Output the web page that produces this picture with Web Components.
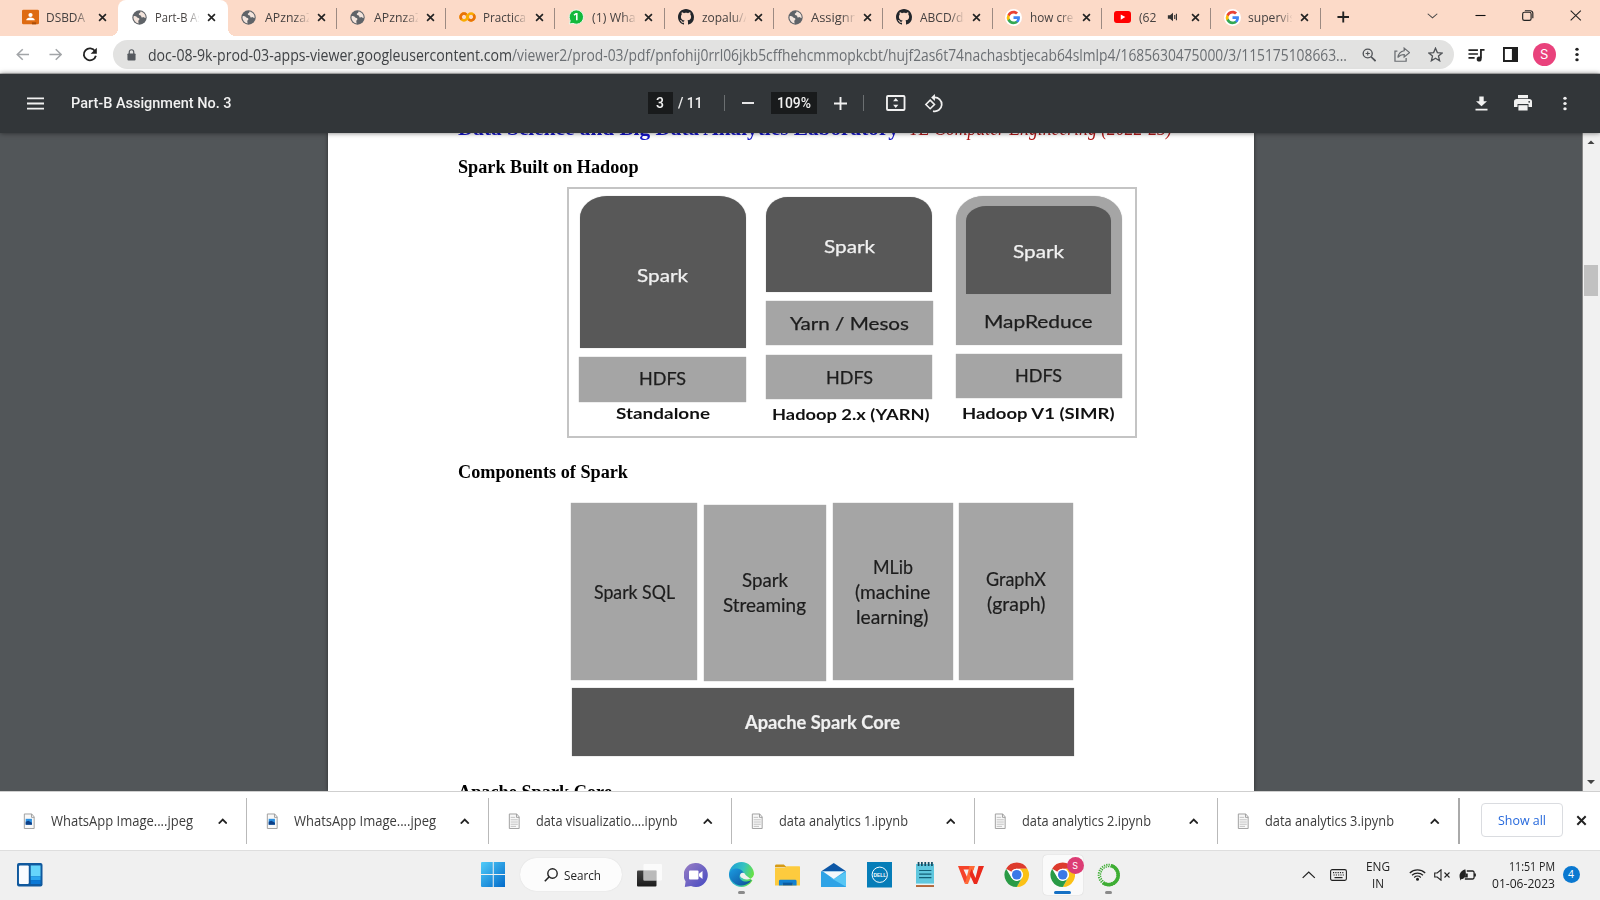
<!DOCTYPE html>
<html lang="en">
<head>
<meta charset="utf-8">
<title>Part-B Assignment No. 3</title>
<style>
html,body{margin:0;height:100%;overflow:hidden;background:#f0f0f0}
</style>
</head>
<body>
<desktop-screen></desktop-screen>
<script>
const define=(name,css,html,after)=>customElements.define(name,class extends HTMLElement{
  connectedCallback(){
    if(this.shadowRoot)return;
    const root=this.attachShadow({mode:'open'});
    root.innerHTML='<style>*{box-sizing:border-box}'+css+'</style>'+(typeof html==='function'?html(this):html);
    if(after)after(this,root);
  }
});

/* ---------- icons ---------- */
const G='<path fill="#4285f4" d="M23 12.3c0-.8-.1-1.6-.2-2.3H12v4.4h6.200c-.3 1.400-1.100 2.600-2.300 3.400v2.900h3.700c2.200-2 3.400-5 3.400-8.400z"/><path fill="#34a853" d="M12 23.500c3.100 0 5.700-1 7.600-2.800l-3.700-2.900c-1 .7-2.300 1.100-3.900 1.100-3 0-5.500-2-6.400-4.700H1.800v3C3.700 21 7.500 23.500 12 23.500z"/><path fill="#fbbc05" d="M5.600 14.200a6.900 6.900 0 0 1 0-4.400v-3H1.800a11.500 11.500 0 0 0 0 10.400z"/><path fill="#ea4335" d="M12 5.100c1.700 0 3.200.6 4.400 1.700l3.300-3.300C17.700 1.600 15.100.5 12 .5 7.500.5 3.700 3 1.800 6.800l3.800 3C6.500 7.100 9 5.100 12 5.100z"/>';
const chrome='<circle cx="24" cy="24" r="23" fill="#fff"/><path fill="#dd3b2d" d="M24 1a23 23 0 0 1 20 11.500H24A11.500 11.500 0 0 0 14 18.300L4 12.600A23 23 0 0 1 24 1z"/><path fill="#fbc116" d="M44 12.500A23 23 0 0 1 24 47l10-17.300a11.500 11.500 0 0 0 0-11.500L30 12.500z"/><path fill="#2a9b46" d="M24 47A23 23 0 0 1 4 12.500l10 17.300a11.500 11.500 0 0 0 14 4.900z"/><path fill="#2a9b46" d="M24 47l10-17.300a11.500 11.500 0 0 1-8 5.700z"/><circle cx="24" cy="24" r="11.500" fill="#fff"/><circle cx="24" cy="24" r="9" fill="#3b78e7"/>';
const page='<path d="M1.500 1h8.300L12.500 4v12h-11z" fill="#f8f8f8" stroke="#9c9c9c"/><path d="M9.500 1v3.500h3" fill="none" stroke="#9c9c9c"/>';
const ICONS={
 classroom:['0 0 24 24','<rect width="24" height="22" y="1" rx="2" fill="#de6b12"/><circle cx="12" cy="9" r="3" fill="#fff"/><path d="M6 17c0-3 3-4.200 6-4.200s6 1.200 6 4.200z" fill="#fff"/><path d="M14 20h6v3h-6z" fill="#a84c06"/>'],
 globe:['0 0 24 24','<circle cx="12" cy="12" r="11.500" fill="#5f6368"/><path fill="#f3e4dc" d="M3 9.500c2 .2 3.800.3 5 2 1 1.500 3.700.8 3.800 2.800.1 1.700-1.700 1.700-1.700 3.500 0 1.300.3 2.300.6 3.700A10 10 0 0 1 2.300 11zM13.500 2.200c0 1.400-.2 2.300-1.700 2.800-1.300.4-1 1.600-.5 2.500.7 1.200 2.300.5 3.100 1.700.7 1 .1 2.300 1.400 2.800 1.200.4 1.600-.9 2.800-.6 1.300.3 2 1 3.200 1.200.5-4.600-2.500-9.400-8.300-10.400z"/>'],
 colab:['0 0 24 14','<g fill="none" stroke-width="3.600"><circle cx="7" cy="7" r="4.800" stroke="#f9ab00"/><circle cx="17" cy="7" r="4.800" stroke="#f9ab00"/><path d="M3.600 10.400A4.800 4.800 0 0 1 10.400 3.600M20.400 3.600A4.800 4.800 0 0 1 13.600 10.400" stroke="#e8710a"/></g>'],
 whats:['0 0 24 24','<path d="M2 22.500l1.300-5A10.700 10.700 0 1 1 7.500 21.500z" fill="#12b93c" stroke="#e9f8ec" stroke-width="1.500"/><path d="M9 9.200l3-2.200h1.200v10" fill="none" stroke="#fff" stroke-width="2.300"/>'],
 github:['0 0 16 16','<path fill="#22262b" d="M8 0C3.580 0 0 3.580 0 8c0 3.540 2.290 6.530 5.470 7.590.4.070.55-.17.55-.38 0-.19-.01-.82-.01-1.490-2.010.37-2.530-.49-2.690-.94-.09-.23-.48-.94-.82-1.130-.28-.15-.68-.52-.01-.53.63-.01 1.080.58 1.230.82.72 1.210 1.870.87 2.330.66.070-.52.28-.87.51-1.070-1.780-.2-3.640-.89-3.640-3.950 0-.87.31-1.590.82-2.150-.08-.2-.36-1.020.08-2.120 0 0 .67-.21 2.200.82.64-.18 1.320-.27 2-.27s1.360.09 2 .27c1.530-1.040 2.200-.82 2.200-.82.44 1.100.16 1.920.08 2.120.51.56.82 1.270.82 2.150 0 3.070-1.870 3.750-3.650 3.950.29.25.54.73.54 1.480 0 1.070-.01 1.930-.01 2.200 0 .21.15.46.55.38A8.010 8.010 0 0 0 16 8c0-4.420-3.580-8-8-8z"/>'],
 google:['-2.500 -2.500 29 29','<circle cx="12" cy="12" r="14.500" fill="#fff"/>'+G],
 youtube:['0 0 24 16','<rect width="24" height="16" rx="4" fill="#f00"/><path d="M9.500 4.500l6.500 3.500-6.500 3.500z" fill="#fff"/>'],
 sound:['0 0 14 12','<path d="M1 4h2.500L7 1v10L3.500 8H1z" fill="#333"/><path d="M9 3.500v5M11 2v8" stroke="#333" stroke-width="1.300"/>'],
 x:['0 0 10 10','<path d="M1.200 1.200l7.600 7.600M8.800 1.200L1.200 8.800" stroke="#222" stroke-width="1.800"/>'],
 plus:['0 0 14 14','<path d="M7 .5v13M.5 7h13" stroke="#222" stroke-width="2.100"/>'],
 down:['0 0 12 8','<path d="M.8 1l5.200 5.500L11.200 1" fill="none" stroke="#444" stroke-width="1.100"/>'],
 min:['0 0 12 12','<path d="M.5 6h11" stroke="#111" stroke-width="1.200"/>'],
 restore:['0 0 12 12','<rect x=".7" y="2.500" width="8.800" height="8.800" rx="1.800" fill="none" stroke="#222" stroke-width="1.200"/><path d="M3 .8h5.500a2.800 2.800 0 0 1 2.800 2.800V9" fill="none" stroke="#222" stroke-width="1.200"/>'],
 close:['0 0 12 12','<path d="M.7.7l10.600 10.600M11.300.7L.7 11.300" stroke="#222" stroke-width="1.100"/>'],
 back:['0 0 14 14','<path d="M13.500 7H1.500M7 1.300L1.300 7 7 12.700" fill="none" stroke="#a2a5a8" stroke-width="1.600"/>'],
 fwd:['0 0 14 14','<path d="M.5 7h12M7 1.300L12.700 7 7 12.700" fill="none" stroke="#a2a5a8" stroke-width="1.600"/>'],
 reload:['0 0 16 16','<path d="M13.500 4.500A6.300 6.300 0 1 0 14.300 9.300" fill="none" stroke="#222" stroke-width="1.900"/><path d="M15.300.8v6.400H8.900z" fill="#222"/>'],
 lock:['0 0 10 13','<rect x=".5" y="4.800" width="9" height="7.700" rx="1" fill="#55595e"/><path d="M2.500 5.500V3.300a2.500 2.500 0 0 1 5 0v2.200" fill="none" stroke="#55595e" stroke-width="1.300"/>'],
 zoom:['0 0 16 16','<circle cx="6.300" cy="6.300" r="5" fill="none" stroke="#505357" stroke-width="1.500"/><path d="M10 10l5 5" stroke="#505357" stroke-width="2"/><path d="M6.300 4v4.600M4 6.300h4.600" stroke="#505357" stroke-width="1.200"/>'],
 share:['0 0 17 16','<path d="M3.500 4.500H1v10.700h11.500v-3.500" fill="none" stroke="#6a6d71" stroke-width="1.300"/><path d="M10.500 1.200L16 6l-5.500 4.600V8C7.800 8 5.600 9 4 11.200 4.500 7.500 6.500 4.600 10.500 4z" fill="none" stroke="#6a6d71" stroke-width="1.300"/>'],
 star:['0 0 16 16','<path d="M8 1.300l2 4.700 5.100.4-3.900 3.300 1.200 5L8 12l-4.400 2.700 1.200-5L.9 6.400 6 6z" fill="none" stroke="#505357" stroke-width="1.400"/>'],
 music:['0 0 18 14','<path d="M.5 2.200h10M.5 6h10M.5 9.800h6.500" stroke="#222" stroke-width="1.700"/><path d="M13.700 1v9.500M13 1.900h4.500" stroke="#222" stroke-width="1.900"/><circle cx="11.800" cy="11" r="2.600" fill="#222"/>'],
 panel:['0 0 16 15','<rect x="1" y="1" width="14" height="13" fill="#fff" stroke="#1f1f1f" stroke-width="2"/><path d="M9.500 1h5.500v13H9.500z" fill="#1f1f1f"/>'],
 dots:['0 0 4 16','<g fill="currentColor"><circle cx="2" cy="2.400" r="1.700"/><circle cx="2" cy="8" r="1.700"/><circle cx="2" cy="13.600" r="1.700"/></g>'],
 menu:['0 0 17 14','<path d="M0 1.500h17M0 7h17M0 12.500h17" stroke="#f1f1f1" stroke-width="2"/>'],
 minus:['0 0 12 12','<path d="M0 6h12" stroke="#f1f1f1" stroke-width="1.900"/>'],
 add:['0 0 13 13','<path d="M6.500 0v13M0 6.500h13" stroke="#f1f1f1" stroke-width="1.900"/>'],
 fit:['0 0 20 16','<rect x="1" y="1" width="18" height="14" rx="1" fill="none" stroke="#f1f1f1" stroke-width="1.900"/><path d="M10 3l2.700 3.200H7.300zM10 13l2.700-3.200H7.300z" fill="#f1f1f1"/>'],
 rotate:['0 0 20 20','<path d="M6.500 6.500L11 11l-4.500 4.500L2 11z" fill="none" stroke="#f1f1f1" stroke-width="1.700"/><path d="M10.500 3.700A7.300 7.300 0 1 1 9.500 18" fill="none" stroke="#f1f1f1" stroke-width="1.800"/><path d="M11.500 0v7.400L7.500 3.700z" fill="#f1f1f1"/>'],
 download:['0 0 13 16','<path d="M4.300.5h4.400v5h3.300L6.500 11 1 5.500h3.300zM.5 13.500h12v2H.5z" fill="#f1f1f1"/>'],
 print:['0 0 18 16','<path d="M4 0h10v3.200H4zM2.800 4h12.400A2.800 2.800 0 0 1 18 6.800V12h-3.500V9h-11v3H0V6.800A2.800 2.800 0 0 1 2.800 4z" fill="#f1f1f1"/><path d="M5.200 10.200h7.600v4.600H5.200z" fill="#f1f1f1" stroke="#f1f1f1" stroke-width="1.600"/><path d="M4 9.600h10" stroke="#323639" stroke-width="1.200"/><circle cx="15.200" cy="6.800" r=".9" fill="#323639"/>'],
 img:['0 0 14 17',page+'<path d="M3 6h7v6H3z" fill="#2b8fe0"/><path d="M3 12V9l3-1 4 2v2z" fill="#0d3f86"/>'],
 doc:['0 0 14 17',page+'<path d="M3 4.500h5M3 7h8M3 9.300h8M3 11.600h8M3 13.800h6" stroke="#b9b9b9" stroke-width=".9"/>'],
 up:['0 0 10 7','<path d="M.8 6L5 1.700 9.200 6" fill="none" stroke="#222" stroke-width="1.900"/>'],
 widget:['0 0 26 24','<rect width="26" height="24" rx="2" fill="#10599e"/><rect x="2" y="2.500" width="10" height="19" rx="1" fill="#fafcff"/><rect x="14" y="2.500" width="10" height="11" fill="#66d5fb"/><rect x="14" y="13.500" width="10" height="4" fill="#2ba5ee"/><rect x="14" y="17.500" width="10" height="4" fill="#0b78d6"/>'],
 win:['0 0 24 24','<defs><linearGradient id="w" x1="0" y1="0" x2="1" y2="1"><stop stop-color="#51ccf9"/><stop offset="1" stop-color="#0169c9"/></linearGradient></defs><path fill="url(#w)" d="M1 0h10.500v11.500H0V1a1 1 0 0 1 1-1zM12.500 0H23a1 1 0 0 1 1 1v10.500H12.500zM0 12.500h11.500V24H1a1 1 0 0 1-1-1zM12.500 12.500H24V23a1 1 0 0 1-1 1H12.500z"/>'],
 search:['0 0 14 14','<circle cx="8.500" cy="5.500" r="4.700" fill="none" stroke="#222" stroke-width="1.400"/><path d="M5 9L.8 13.200" stroke="#222" stroke-width="1.600"/>'],
 tasks:['0 0 26 24','<defs><linearGradient id="a" x1="0" y1="0" x2="0" y2="1"><stop stop-color="#444"/><stop offset="1" stop-color="#1b1b1b"/></linearGradient></defs><rect x="0" y="7.500" width="19.500" height="16" rx="1" fill="url(#a)"/><rect x="6.500" y="1" width="18.500" height="16.500" rx="1" fill="#fff" opacity=".75"/><rect x="6.500" y="7.500" width="13" height="10" fill="#b5b5b5" opacity=".8"/>'],
 chat:['0 0 24 24','<defs><linearGradient id="c" x1="0" y1="0" x2="1" y2="1"><stop stop-color="#9a7fc4"/><stop offset="1" stop-color="#4549c2"/></linearGradient></defs><path fill="url(#c)" d="M12 0a12 12 0 1 1-5 23L.8 24l.8-5.500A12 12 0 0 1 12 0z"/><rect x="5" y="7.500" width="9.500" height="9" rx="1" fill="#fff"/><path d="M15 10.800L18.500 8v8L15 13.200z" fill="#fff"/>'],
 edge:['0 0 24 24','<defs><linearGradient id="e1" x1="0" y1="0" x2="1" y2=".3"><stop stop-color="#1c9bd8"/><stop offset=".6" stop-color="#35c3c0"/><stop offset="1" stop-color="#66e048"/></linearGradient><linearGradient id="e2" x1="0" y1="0" x2="1" y2="1"><stop stop-color="#1b9de2"/><stop offset="1" stop-color="#0e4b96"/></linearGradient></defs><circle cx="12" cy="12" r="12" fill="url(#e1)"/><path d="M0 12C1 7.500 5 5.500 9 6.500c3 .7 5 2.500 5.300 5.500-.8-1.800-4.300-1-4.300 1.800 0 3 4 5.700 8 4.700 1.800-.4 3.300-1 4-1.500A12 12 0 0 1 0 12z" fill="url(#e2)"/><path d="M14 11c-2 0-2.500 1.500-2.200 3 .5 2 3 3 5.700 2.900 3.500-.2 5.800-2.200 6.500-4.900l1 8-3-2.800" fill="#f0f0f0"/><circle cx="13.200" cy="12.700" r="2.500" fill="#f0f0f0"/>'],
 folder:['0 0 26 24','<path d="M0 3a1.500 1.500 0 0 1 1.500-1.500H9l3 3H0z" fill="#d69a14"/><path d="M0 5h9.500l2.500-1.500h12.500A1.500 1.500 0 0 1 26 5v18.500H0z" fill="#fdcb3e"/><path d="M4 23.500V19a1.500 1.500 0 0 1 1.500-1.500h15A1.500 1.500 0 0 1 22 19v4.500h-4v-2H8v2z" fill="#1382d2"/><path d="M8 20.500h10v3H8z" fill="#0b5a9e"/>'],
 mail:['0 0 26 24','<path d="M0 8.500L13 0l13 8.500z" fill="#0d57a6"/><path d="M0 8.500h26V24H0z" fill="#2fa3e6"/><path d="M26 8.500V24L9 14.500l4 1.500z" fill="#58c6f4"/><path d="M2 8.500h22L13 16z" fill="#f4f8fb"/>'],
 dell:['0 0 26 26','<rect width="26" height="26" fill="#067db8"/><circle cx="13" cy="13" r="7.800" fill="none" stroke="#fff" stroke-width="1"/><text x="13" y="15.200" text-anchor="middle" font-family="Liberation Sans" font-weight="bold" font-size="5.600" fill="#fff" textLength="13" lengthAdjust="spacingAndGlyphs">DELL</text>'],
 notes:['0 0 18 26','<rect y="2" width="18" height="22" fill="#5fc7de"/><rect y="23" width="18" height="2.500" fill="#b5673a"/><rect y="22" width="18" height="1.500" fill="#e8f4f6"/><path d="M3 8.700h12M3 12.300h12M3 16h12" stroke="#135f77" stroke-width="1.200"/><path d="M2.500 0v4M5.700 0v4M9 0v4M12.300 0v4M15.500 0v4" stroke="#174c62" stroke-width="1.700"/>'],
 wps:['0 0 26 20','<path d="M0 1h16v3.500H5.500L9.500 13 7 19z" fill="#f5432a"/><path d="M11.500 1H17L10 19H7z" fill="#ff6a36"/><path d="M20.500 1H26l-7 18h-3L11.500 9l2-5L17.500 13z" fill="#ea2a1c"/>'],
 chrome:['0 0 48 48',chrome],
 ring:['0 0 24 24','<circle cx="12" cy="12" r="9.700" fill="none" stroke="#3fae35" stroke-width="3.400" stroke-dasharray="34 100" transform="rotate(-75 12 12)"/><circle cx="12" cy="12" r="10.300" fill="none" stroke="#3fae35" stroke-width="2" stroke-dasharray="1.300 1.100"/><circle cx="12" cy="12" r="8.400" fill="none" stroke="#3fae35" stroke-width="1.300" stroke-dasharray="1.500 .9"/>'],
 trayup:['0 0 14 8','<path d="M.7 7.300L7 1.200l6.300 6.100" fill="none" stroke="#222" stroke-width="1.300"/>'],
 keyboard:['0 0 17 12','<rect x=".6" y=".6" width="15.800" height="10.800" rx="1.600" fill="none" stroke="#222" stroke-width="1.100"/><path d="M3 3.700h11.500M3.500 6h11" stroke="#222" stroke-width="1.200" stroke-dasharray="1.200 1.100"/><path d="M4.500 8.600h8" stroke="#222" stroke-width="1.200"/>'],
 wifi:['0 0 17 13','<g fill="none" stroke="#222" stroke-width="1.200"><path d="M.8 5a11 11 0 0 1 15.400 0M3 7.300a8 8 0 0 1 11 0M5.200 9.500a4.800 4.800 0 0 1 6.600 0"/></g><circle cx="8.500" cy="11.300" r="1.500" fill="#222"/>'],
 mute:['0 0 17 12','<path d="M.7 4h2.500L7 .8v10.400L3.200 8H.7z" fill="none" stroke="#222" stroke-width="1.100"/><path d="M10.500 3.500l5 5M15.500 3.500l-5 5" stroke="#222" stroke-width="1.100"/>'],
 battery:['0 0 18 12','<path d="M8 2h6a1.500 1.500 0 0 1 1.500 1.500v5A1.500 1.500 0 0 1 14 10H6M16.700 4.500v3" fill="none" stroke="#222" stroke-width="1.300"/><path d="M6.500.3C2.500 1.500-.3 4.500.8 9l.8 2.500 1-1.500C6 10 8 6 6.500.3zM7 4.500h2v4H6z" fill="#222"/>'],
 scrollup:['0 0 8 5','<path d="M0 5l4-4.500L8 5z" fill="#444"/>'],
 scrolldn:['0 0 8 5','<path d="M0 0h8L4 4.500z" fill="#444"/>']
};
define('ui-icon',':host{display:inline-block;flex:none;line-height:0}svg{display:block;width:100%;height:100%}',e=>{
  const [vb,body]=ICONS[e.getAttribute('name')],b=vb.split(' ');
  e.style.width=(e.getAttribute('w')||b[2])+'px';e.style.height=(e.getAttribute('h')||b[3])+'px';
  return `<svg viewBox="${vb}" preserveAspectRatio="none">${body}</svg>`;
});
const ic=(n,w,h,extra='')=>`<ui-icon name="${n}" w="${w}" h="${h}" ${extra}></ui-icon>`;

/* Text set condensed or expanded to an exact measure */
define('fit-text',':host{display:inline-block;flex:none;white-space:nowrap}span{display:inline-block;transform-origin:0 50%}','<span><slot></slot></span>',(e,r)=>{
  const s=r.querySelector('span'),w=+e.getAttribute('w'),n=s.getBoundingClientRect().width;
  e.style.width=w+'px';if(n)s.style.transform=`scaleX(${w/n})`;
});
const ft=(w,t,extra='')=>`<fit-text w="${w}" ${extra}>${t}</fit-text>`;

/* ---------- browser tabs ---------- */
define('browser-tab',`:host{display:flex;align-items:center;width:109.300px;height:36px;flex:none;position:relative;padding:0 0 2px 13px;color:#454140;font-size:13.500px}
 .i{width:16px;display:flex;justify-content:center;margin-right:8px}.t{width:44px;overflow:hidden;white-space:nowrap;-webkit-mask:linear-gradient(90deg,#000 68%,transparent 102%)}
 ui-icon.x{margin-left:8px}
 :host([sep])::after{content:"";position:absolute;right:0;top:8px;width:1px;height:21px;background:#9c8a82}
 :host([active]){background:#fff;border-radius:8px 8px 0 0}
 :host([active]) .f{position:absolute;bottom:0;width:8px;height:8px}.f{display:none}:host([active]) .f{display:block}
 .l{left:-8px;background:radial-gradient(circle at 0 0,transparent 8px,#fff 8.300px)}.r{right:-8px;background:radial-gradient(circle at 100% 0,transparent 8px,#fff 8.300px)}`,
 e=>{const [n,w,h]=e.getAttribute('icon').split(' ');
  return `<i class="f l"></i><i class="f r"></i><span class="i">${ic(n,w,h)}</span><span class="t"${e.hasAttribute('solid')?' style="width:20px;-webkit-mask:none"':''}>${ft(e.getAttribute('w'),'<slot></slot>')}</span>${e.hasAttribute('solid')?ic('sound',12,10,'style="margin:0 4px 0 8px"'):''}${ic('x',9,9,'class="x"')}`});
define('tab-strip',`:host{display:flex;height:36px;background:#fcdac8;padding-left:9px}.plus{margin:11px 0 0 16px}
 .win{margin-left:auto;display:flex;align-items:center;height:31px;padding-right:18.500px;gap:36.500px}`,
 [['classroom 17 16',39,'DSBDA',''],['globe 15 15',56,'Part-B Assi','active'],['globe 15 15',48,'APznzaZ','sep'],['globe 15 15',48,'APznzaZ','sep'],['colab 17 10',46,'Practical','sep'],['whats 16 16',54,'(1) Whats','sep'],['github 16 16',49,'zopalu/A','sep'],['globe 15 15',58,'Assignme','sep'],['github 16 16',50,'ABCD/da','sep'],['google 17 17',50,'how crea','sep'],['youtube 17 12',17.5,'(62','sep solid'],['google 17 17',54,'supervise','sep']]
 .map(a=>`<browser-tab icon="${a[0]}" w="${a[1]}" ${a[3]}>${a[2]}</browser-tab>`).join('')+ic('plus',12.5,12,'class="plus"')+`<div class="win">${ic('down',11,6)}${ic('min',11,11)}${ic('restore',11.5,11)}${ic('close',11.5,11)}</div>`);

/* ---------- address bar ---------- */
define('address-bar',`:host{display:flex;height:38px;background:#fff;border-bottom:1px solid #c9c9c9;align-items:center;padding:0 0 0 16px;color:#222}
 .pill{display:flex;align-items:center;width:1341px;height:29px;border-radius:15px;background:#e2e2e1;margin-left:15.500px;padding-left:14px;font-size:16px}
 .d{margin-left:11.500px;color:#3f4245}.p{color:#6b6f73}
 .av{width:23.500px;height:23.500px;border-radius:50%;background:#e9427c;color:#fff;font:13px/23.500px Inter,sans-serif;text-align:center;margin:0 19px 0 15px}`,
 ic('back',13.5,13)+ic('fwd',13.5,13,'style="margin-left:19px"')+ic('reload',15.5,15,'style="margin-left:20px"')+
 `<div class="pill">${ic('lock',9,12)}${ft(364,'doc-08-9k-prod-03-apps-viewer.googleusercontent.com','class="d"')}${ft(835,'/viewer2/prod-03/pdf/pnfohij0rrl06jkb5cffhehcmmopkcbt/hujf2as6t74nachasbtjecab64slmlp4/1685630475000/3/115175108663...','class="p"')}${ic('zoom',14.5,14,'style="margin-left:15px"')}${ic('share',16.5,15,'style="margin-left:17.500px"')}${ic('star',15,15,'style="margin-left:18px"')}</div>`+
 ic('music',17,14,'style="margin-left:14px"')+ic('panel',15,15,'style="margin-left:17.500px"')+'<div class="av">S</div>'+ic('dots',4,15));

/* ---------- PDF toolbar ---------- */
define('pdf-toolbar',`:host{display:flex;height:58.500px;background:#323639;align-items:center;color:#f1f1f1;font:500 14px/20px Roboto,sans-serif;position:relative;z-index:2;box-shadow:0 0 5px rgba(0,0,0,.55);padding-left:27px}
 .b{background:#191b1c;height:22px;display:flex;align-items:center;justify-content:center}.s{width:1px;height:16px;background:#6b6f71}
 .c{display:flex;align-items:center;width:296px;margin-left:416px}.r{margin-left:auto;display:flex;align-items:center;padding-right:33.500px}`,
 ic('menu',17,13)+ft(160.5,'Part-B Assignment No. 3','style="margin-left:27px"')+
 `<div class="c"><div class="b" style="width:25px">${ft(8,'3')}</div>${ft(24.5,'/ 11','style="margin-left:5px"')}<i class="s" style="margin-left:21.500px"></i>${ic('minus',12,12,'style="margin-left:17px"')}<div class="b" style="width:46.500px;margin-left:17px">${ft(34,'109%')}</div>${ic('add',13,13,'style="margin-left:16.500px"')}<i class="s" style="margin-left:16.500px"></i>${ic('fit',19.5,16,'style="margin-left:22px"')}${ic('rotate',19,19,'style="margin-left:18px"')}</div><div class="r">${ic('download',13,15)}${ic('print',18,16,'style="margin-left:26px"')}${ic('dots',4,15,'style="margin-left:31px"')}</div>`);

/* ---------- document figures ---------- */
define('fig-block',`:host{display:flex;flex-direction:column;align-items:center;justify-content:center;flex:none;background:#a5a5a5;color:#1d1d1d;box-shadow:0 0 1px #999}:host([dark]){background:#585858;color:#f0f0f0}`,'<slot></slot>');
const blk=(w,h,body,st='',at='')=>`<fig-block ${at} style="width:${w}px;height:${h}px;${st}">${body}</fig-block>`;
define('hadoop-figure',`:host{display:flex;width:569.500px;height:251px;margin-left:109px;border:2px solid #c4c4c4;font:16.500px/20px Lato,sans-serif;-webkit-text-stroke:.25px}
 .c{display:flex;flex-direction:column;align-items:center;flex:none}.n{font-weight:700;font-size:15px;color:#111;-webkit-text-stroke:0}`,
 `<div class="c" style="width:167px;margin:7px 0 0 10px">${blk(166,152,ft(51,'Spark'),'border-radius:27px 27px 0 0/22px 22px 0 0;padding-top:8px','dark')}${blk(167,45,ft(47,'HDFS'),'margin-top:9px')}${ft(94,'Standalone','class="n" style="margin-top:1.500px"')}</div>
 <div class="c" style="width:167px;margin:8.500px 0 0 19.500px">${blk(166,94.5,ft(51,'Spark'),'border-radius:22px 22px 0 0/19px 19px 0 0;padding-top:6px','dark')}${blk(167,44,ft(119,'Yarn / Mesos'),'margin-top:9.500px;padding-top:2px')}${blk(166,43.5,ft(47,'HDFS'),'margin-top:10px;padding-top:2px')}${ft(157.5,'Hadoop 2.x (YARN)','class="n" style="margin:5.500px 0 0 4px"')}</div>
 <div class="c" style="width:166px;margin:7px 0 0 23px">${blk(166,149.5,blk(145,88.5,ft(51,'Spark'),'border-radius:20px 20px 0 0/15px 15px 0 0;padding-top:5px','dark')+ft(108.5,'MapReduce','style="margin-top:18px"'),'border-radius:28px 28px 0 0/24px 24px 0 0;justify-content:flex-start;padding-top:10px')}${blk(166,44,ft(47,'HDFS'),'margin-top:9px')}${ft(152.5,'Hadoop V1 (SIMR)','class="n" style="margin-top:5px"')}</div>`);
define('spark-figure',`:host{display:block;margin-left:113px;width:505px;font:19px/25px Lato,sans-serif;-webkit-text-stroke:.2px}.r{display:flex;align-items:flex-start;height:185px}.core{font-weight:700}`,
 `<div class="r">${blk(126,176.5,ft(81,'Spark SQL'))}${blk(122,176.5,ft(46,'Spark')+ft(83,'Streaming'),'margin:1.500px 0 0 6.500px;padding-bottom:2px')}${blk(120,176.5,ft(40,'MLib')+ft(75.5,'(machine')+ft(72.5,'learning)'),'margin-left:7px')}${blk(113.5,176.5,ft(60,'GraphX')+ft(58.5,'(graph)'),'margin-left:6.500px')}</div>
 <div class="core">${blk(501.5,67.5,ft(155,'Apache Spark Core'),'margin-left:1px','dark')}</div>`);
define('pdf-page',`:host{display:block;width:926.500px;height:658.500px;background:#fff;margin-left:327.500px;padding-left:130.500px;overflow:hidden;box-shadow:0 0 4px rgba(0,0,0,.5);font:bold 18.700px/22px "Liberation Serif",serif;color:#000}
 .h{display:flex;gap:10px;height:22px;margin-top:-15.500px;font-size:20px}.h1,.h2{height:22px}`,
 `<div class="h">${ft(441,'Data Science and Big Data Analytics Laboratory','style="color:#1414c8"')}${ft(263,'TE Computer Engineering (2022-23)','style="color:#b01818;font-style:italic;font-weight:400"')}</div>
 <div class="h1" style="margin-top:17px">${ft(180.5,'Spark Built on Hadoop')}</div><hadoop-figure style="margin-top:8.500px"></hadoop-figure>
 <div class="h2" style="margin-top:23px">${ft(170,'Components of Spark')}</div><spark-figure style="margin-top:20.500px"></spark-figure>
 <div style="margin-top:25.500px">${ft(154,'Apache Spark Core')}</div>`);
define('scroll-bar',`:host{display:flex;flex-direction:column;align-items:center;width:18px;height:100%;background:#f1f1f1;border-left:1px solid #888;padding:7px 1px 7px 0;margin-left:auto}
 .th{width:14px;height:31px;background:#c1c1c1;margin-top:120.500px;margin-bottom:auto}`,ic('scrollup',8,4.5)+'<div class="th"></div>'+ic('scrolldn',8,4.5));
define('pdf-viewer',`:host{display:flex;height:658.500px;overflow:hidden;background:#525659}`,'<pdf-page></pdf-page><scroll-bar></scroll-bar>');

/* ---------- downloads ---------- */
define('download-item',`:host{display:flex;align-items:center;width:242.800px;height:46px;flex:none;border-right:1px solid #b9b9b9;padding:0 18.500px 0 19px;color:#3c3c3c;font-size:14px}:host([first]){width:246.500px;padding-left:23px}:host([last]){border-right:2px solid #aaa}
 .t{margin-left:15.500px;margin-right:auto}`,e=>ic(e.getAttribute('icon'),12.5,16.5)+ft(e.getAttribute('w'),'<slot></slot>','class="t"')+ic('up',9.5,6.5));
define('download-shelf',`:host{display:flex;height:59px;background:#fff;border-top:1px solid #cfcfcf;padding-top:6px}
 .all{width:81.500px;height:34px;border:1px solid #dadce0;border-radius:4px;margin:4.500px 13px 0 21px;display:flex;align-items:center;justify-content:center;color:#2568dc;font-size:13.500px;font-weight:500}.x{margin-top:16.500px}`,
 `<download-item icon="img" w="142" first>WhatsApp Image....jpeg</download-item><download-item icon="img" w="142">WhatsApp Image....jpeg</download-item><download-item icon="doc" w="141.500">data visualizatio....ipynb</download-item><download-item icon="doc" w="129">data analytics 1.ipynb</download-item><download-item icon="doc" w="129">data analytics 2.ipynb</download-item><download-item icon="doc" w="129" last>data analytics 3.ipynb</download-item><div class="all">${ft(48,'Show all')}</div>${ic('x',11,11,'class="x"')}`);

/* ---------- taskbar ---------- */
define('task-item',`:host{display:flex;align-items:center;justify-content:center;width:45.850px;height:49px;flex:none;position:relative}
 :host([run])::after{content:"";position:absolute;bottom:5px;width:7px;height:3px;border-radius:2px;background:#8a8a8a}
 :host([front])::before{content:"";position:absolute;inset:4.500px 3px;background:#fafafa;border-radius:4px;box-shadow:0 0 1px #bbb}
 :host([front])::after{content:"";position:absolute;bottom:5px;width:17px;height:3px;border-radius:2px;background:#1570c4}
 ui-icon{position:relative}.bd{position:absolute;left:27px;top:6.500px;width:17px;height:17px;border-radius:50%;background:#dc3c74;color:#fff;font:9px/17px Inter,sans-serif;text-align:center}`,
 e=>ic(e.getAttribute('icon'),e.getAttribute('w'),e.getAttribute('h'))+(e.hasAttribute('front')?'<span class="bd">S</span>':''));
define('task-bar',`:host{display:flex;height:50px;background:#f0f0f0;border-top:1px solid #dedede;align-items:center;color:#222;font-size:13.500px;line-height:16.500px;padding-bottom:1.500px}
 .pill{display:flex;align-items:center;width:102px;height:33px;border-radius:17px;background:#fcfcfc;box-shadow:0 0 1px #ccc;padding-left:24px;margin:0 4.800px 0 4.500px}
 .tr{margin-left:auto;display:flex;align-items:center;padding-right:20.500px}.st{display:flex;flex-direction:column;align-items:center}
 .bd{width:17px;height:17px;border-radius:50%;background:#0a78d0;color:#fff;text-align:center;font-size:10.500px;line-height:17px;margin-left:7.500px}`,
 `${ic('widget',25.5,23.5,'style="margin:0 427.500px 0 17px"')}<task-item icon="win" w="24.500" h="25"></task-item><div class="pill">${ic('search',14,14)}${ft(37,'Search','style="margin-left:5.500px"')}</div>`+
 [['tasks',26,24],['chat',24,24],['edge',25,25,'run'],['folder',25.5,23],['mail',25.5,24],['dell',25.5,25.5],['notes',18.5,25.5],['wps',26,20],['chrome',25.5,25.5],['chrome',25.5,25.5,'front'],['ring',23.5,24,'run']].map(a=>`<task-item icon="${a[0]}" w="${a[1]}" h="${a[2]}" ${a[3]||''}></task-item>`).join('')+
 `<div class="tr">${ic('trayup',13.5,7.5)}${ic('keyboard',17,12,'style="margin-left:14px"')}<div class="st" style="margin-left:19px">${ft(24,'ENG')}${ft(12,'IN')}</div>${ic('wifi',17,13,'style="margin-left:19px"')}${ic('mute',17,12,'style="margin-left:8px"')}${ic('battery',17.5,12,'style="margin-left:8px"')}<div class="st" style="align-items:flex-end;margin-left:16px">${ft(46,'11:51 PM')}${ft(63,'01-06-2023')}</div><div class="bd">4</div></div>`);

define('desktop-screen',`:host{display:flex;flex-direction:column;width:1600px;height:900px;overflow:hidden;font:14px/20px "Open Sans","Noto Sans",sans-serif;background:#f0f0f0}:host>*{flex:none}`,
 '<tab-strip></tab-strip><address-bar></address-bar><pdf-toolbar></pdf-toolbar><pdf-viewer></pdf-viewer><download-shelf></download-shelf><task-bar></task-bar>');
</script>
</body>
</html>
